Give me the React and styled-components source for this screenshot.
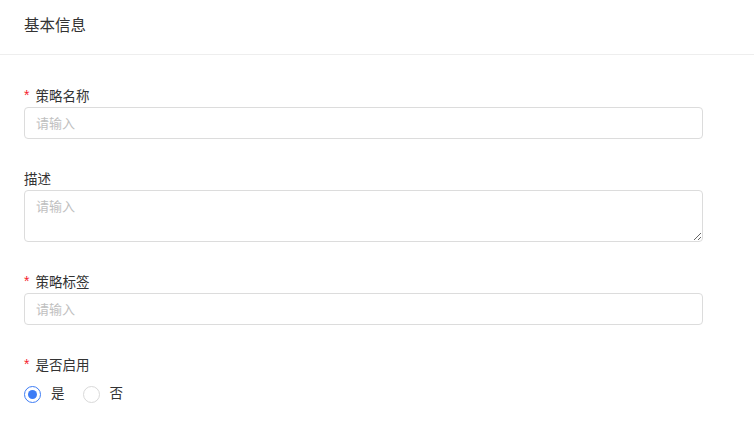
import React, { useState } from 'react'
import styled, { createGlobalStyle } from 'styled-components'

const GlobalStyle = createGlobalStyle`
    * {
        box-sizing: border-box;
    }

    body {
        margin: 0;
        background: #ffffff;
        font-family: "Liberation Sans", "Noto Sans CJK SC", sans-serif;
        color: #333333;
    }
`

const Card = styled.div`
    width: 754px;
    min-height: 441px;
    background: #ffffff;
`

const CardHeader = styled.div`
    height: 55px;
    padding: 15px 24px 0;
    border-bottom: 1px solid #eeeeee;
    font-size: 15.5px;
    line-height: 22px;
    color: #333333;
`

const Form = styled.form`
    display: flex;
    flex-direction: column;
    gap: 28px;
    padding: 29px 51px 0 24px;
`

const FormItem = styled.div`
    display: flex;
    flex-direction: column;
`

const Label = styled.label`
    display: flex;
    align-items: center;
    height: 23px;
    padding-bottom: 1px;
    font-size: 13.5px;
    color: #333333;

    &::before {
        content: ${({ $required }) => ($required ? '"*"' : 'none')};
        margin-right: 6px;
        color: #f5222d;
        font-family: "Liberation Sans", sans-serif;
        font-size: 14px;
    }
`

const Input = styled.input`
    display: block;
    width: 100%;
    height: 32px;
    padding: 0 11px;
    border: 1px solid #dcdcdc;
    border-radius: 4px;
    outline: none;
    font-family: inherit;
    font-size: 13px;
    color: #333333;

    &::placeholder {
        color: #c0c0c0;
    }
`

const TextArea = styled.textarea`
    display: block;
    width: 100%;
    height: 52px;
    padding: 6px 11px;
    border: 1px solid #dcdcdc;
    border-radius: 4px;
    outline: none;
    resize: vertical;
    font-family: inherit;
    font-size: 13px;
    line-height: 20px;
    color: #333333;

    &::placeholder {
        color: #c0c0c0;
    }
`

const RadioGroup = styled.div`
    display: flex;
    align-items: center;
    height: 22px;
    margin-top: 7px;
`

const RadioOption = styled.label`
    display: flex;
    align-items: center;
    margin-right: 8px;
    cursor: pointer;
    font-size: 13.5px;
    color: #333333;
`

const RadioCircle = styled.span`
    position: relative;
    width: 17px;
    height: 17px;
    border-radius: 50%;
    border: 1px solid ${({ $checked }) => ($checked ? '#3d7cf5' : '#d9d9d9')};
    background: #ffffff;

    &::after {
        content: '';
        position: absolute;
        inset: 3px;
        border-radius: 50%;
        background: #3d7cf5;
        display: ${({ $checked }) => ($checked ? 'block' : 'none')};
    }
`

const RadioText = styled.span`
    padding: 0 10px 0 10px;
    line-height: 22px;
`

export default function App() {
    const [enabled, setEnabled] = useState('yes')

    return (
        <Card>
            <GlobalStyle />
            <CardHeader>基本信息</CardHeader>
            <Form onSubmit={(e) => e.preventDefault()}>
                <FormItem>
                    <Label $required>策略名称</Label>
                    <Input placeholder="请输入" />
                </FormItem>

                <FormItem>
                    <Label>描述</Label>
                    <TextArea placeholder="请输入" />
                </FormItem>

                <FormItem>
                    <Label $required>策略标签</Label>
                    <Input placeholder="请输入" />
                </FormItem>

                <FormItem>
                    <Label $required>是否启用</Label>
                    <RadioGroup>
                        <RadioOption onClick={() => setEnabled('yes')}>
                            <RadioCircle $checked={enabled === 'yes'} />
                            <RadioText>是</RadioText>
                        </RadioOption>
                        <RadioOption onClick={() => setEnabled('no')}>
                            <RadioCircle $checked={enabled === 'no'} />
                            <RadioText>否</RadioText>
                        </RadioOption>
                    </RadioGroup>
                </FormItem>
            </Form>
        </Card>
    )
}
